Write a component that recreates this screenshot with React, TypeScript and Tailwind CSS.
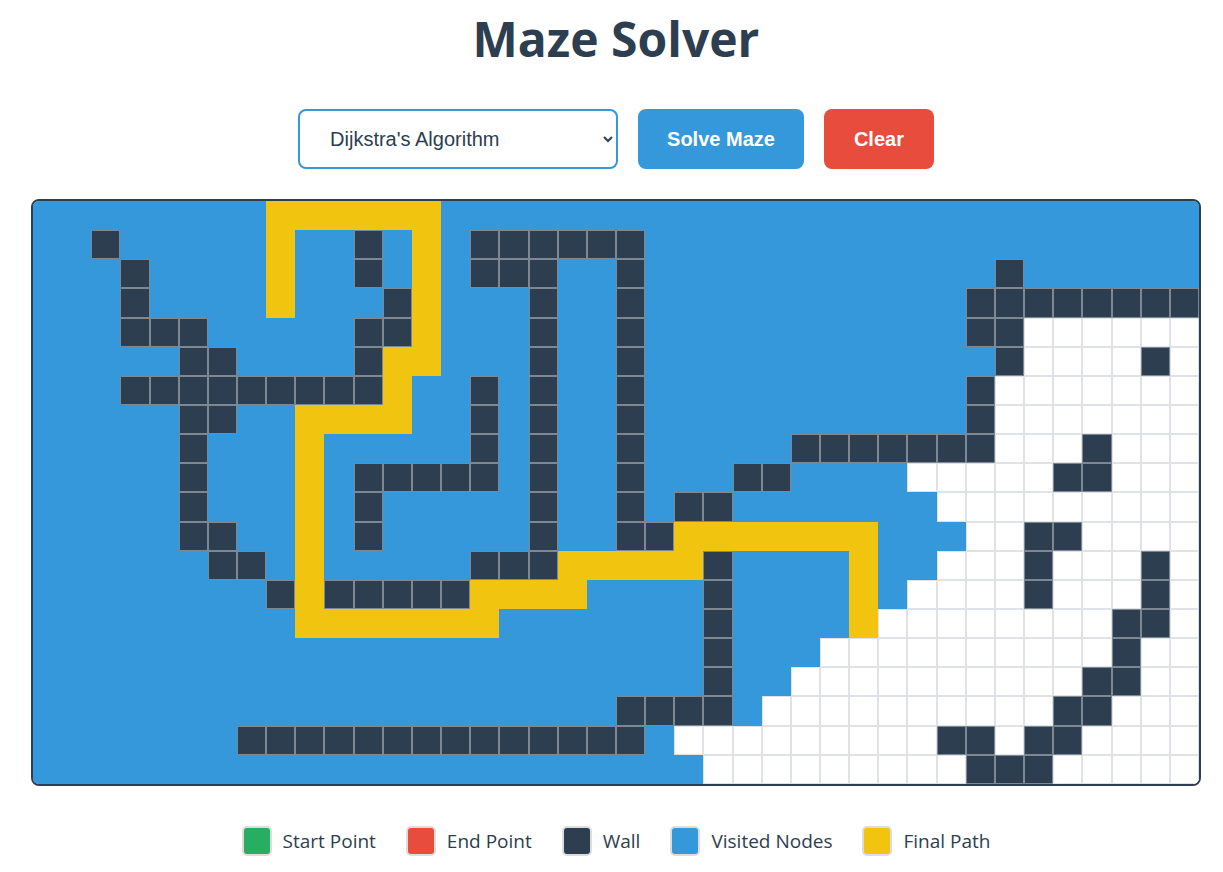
import { useState } from "react";

// . visited, # wall, y path, w unvisited
const maze = [
  "........yyyyyy..........................",
  "..#.....y..#.y.######...................",
  "...#....y..#.y.###..#............#......",
  "...#....y...#y...#..#...........########",
  "...###.....##y...#..#...........##wwwwww",
  ".....##....#yy...#..#............#wwww#w",
  "...#########y..#.#..#...........#wwwwwww",
  ".....##..yyyy..#.#..#...........#wwwwwww",
  ".....#...y.....#.#..#.....#######www#www",
  ".....#...y.#####.#..#...##....wwwww##www",
  ".....#...y.#.....#..#.##.......wwwwwwwww",
  ".....##..y.#.....#..##yyyyyyy...ww##wwww",
  "......##.y.....###yyyyy#....y..www#www#w",
  "........#y#####yyyy....#....y.wwww#www#w",
  ".........yyyyyyy.......#....ywwwwwwww##w",
  ".......................#...wwwwwwwwww#ww",
  ".......................#..wwwwwwwwww##ww",
  "....................####.wwwwwwwwww##www",
  ".......##############.wwwwwwwww##w##wwww",
  ".......................wwwwwwwww###wwwww",
];

const cellClass: Record<string, string> = {
  ".": "bg-[#3498db] border-[#3498db]",
  "#": "bg-[#2c3e50] border-[#7d8893]",
  y: "bg-[#f1c40f] border-[#f1c40f]",
  w: "bg-white border-[#dfe3e7]",
};

const legend = [
  { label: "Start Point", color: "bg-[#27ae60]" },
  { label: "End Point", color: "bg-[#e74c3c]" },
  { label: "Wall", color: "bg-[#2c3e50]" },
  { label: "Visited Nodes", color: "bg-[#3498db]" },
  { label: "Final Path", color: "bg-[#f1c40f]" },
];

export default function App() {
  const [algo, setAlgo] = useState("dijkstra");

  return (
    <div className="min-h-screen bg-white pl-[9px] font-['Open_Sans','Noto_Sans',sans-serif] text-[#2c3e50]">
      <h1 className="pt-[15px] text-center text-[48px] font-bold leading-[48px] text-[#2c3e50]">
        Maze Solver
      </h1>

      <div className="mt-[46px] flex justify-center gap-[20px] font-['Liberation_Sans',Arial,sans-serif]">
        <select
          value={algo}
          onChange={(e) => setAlgo(e.target.value)}
          className="h-[60px] w-[320px] rounded-lg border-2 border-[#3498db] bg-white pl-[26px] pr-[8px] text-[20px] text-[#2c3e50] outline-none"
        >
          <option value="dijkstra">Dijkstra's Algorithm</option>
          <option value="astar">A* Search</option>
          <option value="bfs">Breadth-First Search</option>
          <option value="dfs">Depth-First Search</option>
        </select>
        <button className="h-[60px] rounded-lg bg-[#3498db] px-[29px] text-[20px] font-bold text-white">
          Solve Maze
        </button>
        <button className="h-[60px] rounded-lg bg-[#e74c3c] px-[30px] text-[20px] font-bold text-white">
          Clear
        </button>
      </div>

      <div className="mx-auto mt-[30px] w-[1170px] overflow-hidden rounded-lg border-2 border-[#2c3e50]">
        <div className="grid grid-cols-[repeat(40,1fr)] grid-rows-[repeat(20,29.15px)]">
          {maze.map((row, r) =>
            row.split("").map((c, i) => (
              <div key={r + "-" + i} className={`border ${cellClass[c]}`} />
            ))
          )}
        </div>
      </div>

      <div className="mt-[40px] flex justify-center gap-[30px] pb-[16px]">
        {legend.map((item) => (
          <div key={item.label} className="flex items-center gap-[11px]">
            <div className={`h-[30px] w-[30px] rounded-[5px] border-2 border-[#dddddd] ${item.color}`} />
            <span className="text-[19px] text-[#2c3e50]">{item.label}</span>
          </div>
        ))}
      </div>
    </div>
  );
}
